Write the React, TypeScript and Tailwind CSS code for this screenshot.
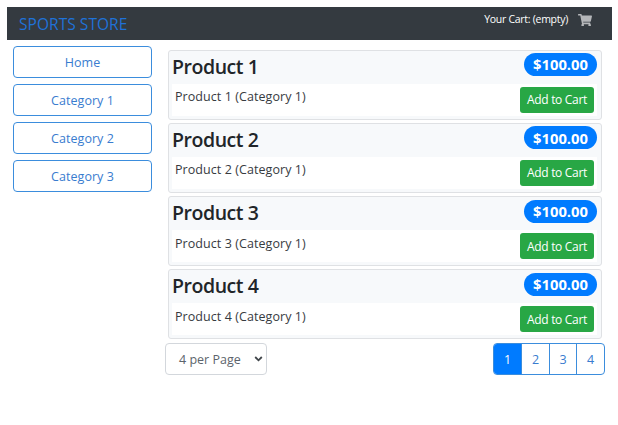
import React from "react";

const categories = ["Home", "Category 1", "Category 2", "Category 3"];
const products = [1, 2, 3, 4];

function CartIcon() {
  return (
    <svg className="h-[12.5px] w-[14px]" viewBox="0 0 576 512" fill="#b4b6b9">
      <path d="M528.12 301.319l47.273-208C578.806 78.301 567.391 64 551.99 64H159.208l-9.166-44.81C147.758 8.021 137.93 0 126.529 0H24C10.745 0 0 10.745 0 24v16c0 13.255 10.745 24 24 24h69.883l70.248 343.435C147.325 417.1 136 435.222 136 456c0 30.928 25.072 56 56 56s56-25.072 56-56c0-15.674-6.447-29.835-16.824-40h209.647C430.447 426.165 424 440.326 424 456c0 30.928 25.072 56 56 56s56-25.072 56-56c0-22.172-12.888-41.332-31.579-50.405l5.517-24.276c3.413-15.018-8.002-29.319-23.403-29.319H218.117l-6.545-32h293.145c11.206 0 20.92-7.754 23.403-18.681z" />
    </svg>
  );
}

function ProductCard({ n }: { n: number }) {
  return (
    <div className="h-[70px] rounded-[3px] border border-[#dfe1e4] bg-[#f7f9fb] pr-[4px] pb-[3px] pl-[3px]">
      <div className="flex h-[33px] items-start justify-between">
        <h4 className="mt-[3px] text-[19.5px] leading-[26px] font-semibold tracking-[-0.45px] whitespace-nowrap text-[#212529]">
          Product {n}
        </h4>
        <span className="mt-[2.5px] flex h-[23px] w-[73px] items-center justify-center rounded-full bg-[#007bff] text-[14.8px] font-bold text-white">
          $100.00
        </span>
      </div>
      <div className="flex h-[32px] items-start justify-between bg-white pr-[3px] pl-[3px]">
        <p className="mt-[4.6px] text-[12.5px] leading-[18px] tracking-[0.07px] whitespace-nowrap text-[#373b3f]">
          Product {n} (Category 1)
        </p>
        <button className="mt-[3px] h-[26px] w-[74px] rounded-[3px] bg-[#28a745] pt-px text-[12px] tracking-[-0.3px] whitespace-nowrap text-white">
          Add to Cart
        </button>
      </div>
    </div>
  );
}

export default function App() {
  return (
    <div className="h-[425px] w-[618px] overflow-hidden bg-white pt-[7px] pl-[7px] font-['Open_Sans','Noto_Sans',sans-serif]">
      <header className="flex h-[33px] w-[605px] justify-between bg-[#343a40] pr-[20px] pl-[12px]">
        <div className="mt-[7px] text-[15.5px] leading-[21px] tracking-[0.05px] whitespace-nowrap text-[#1f72d8]">
          SPORTS STORE
        </div>
        <div className="mt-[5px] flex h-[16px] items-center gap-[10px] text-[10.5px] tracking-[-0.28px] whitespace-nowrap text-white">
          <span>Your Cart: (empty)</span>
          <CartIcon />
        </div>
      </header>
      <div className="flex">
        <nav className="mt-[6px] ml-[6px] flex w-[139px] flex-col gap-[6px]">
          {categories.map((c) => (
            <button
              key={c}
              className="h-[32px] rounded-[4px] border border-[#3b8ddd] pt-[2px] text-[12.5px] tracking-[0.05px] text-[#397ccf]"
            >
              {c}
            </button>
          ))}
        </nav>
        <main className="mt-[9.5px] ml-[13px] w-[440px]">
          <div className="ml-[3px] flex w-[434px] flex-col gap-[3.3px]">
            {products.map((n) => (
              <ProductCard key={n} n={n} />
            ))}
          </div>
          <div className="mt-[3.6px] flex justify-between">
            <div className="flex h-[32px] w-[102px] items-center justify-between rounded-[4px] border border-[#d3d7dc] pr-[3px] pl-[13px] text-[12.5px] whitespace-nowrap text-[#5c646c]">
              <span className="pt-[2px]">4 per Page</span>
              <svg className="h-[8px] w-[9px]" viewBox="0 0 9 8" fill="none" stroke="#40454a" strokeWidth="1.8">
                <path d="M1.2 2 L4.5 5.3 L7.8 2" />
              </svg>
            </div>
            <div className="flex h-[32px] w-[112px] overflow-hidden rounded-[4px] border border-[#3b8ddd] text-[12.5px] text-[#397ccf]">
              <button className="w-[27px] bg-[#007bff] pt-[2px] text-white">1</button>
              <button className="w-[28px] border-l border-[#3b8ddd] pt-[2px]">2</button>
              <button className="w-[27px] border-l border-[#3b8ddd] pt-[2px]">3</button>
              <button className="w-[28px] border-l border-[#3b8ddd] pt-[2px]">4</button>
            </div>
          </div>
        </main>
      </div>
    </div>
  );
}
